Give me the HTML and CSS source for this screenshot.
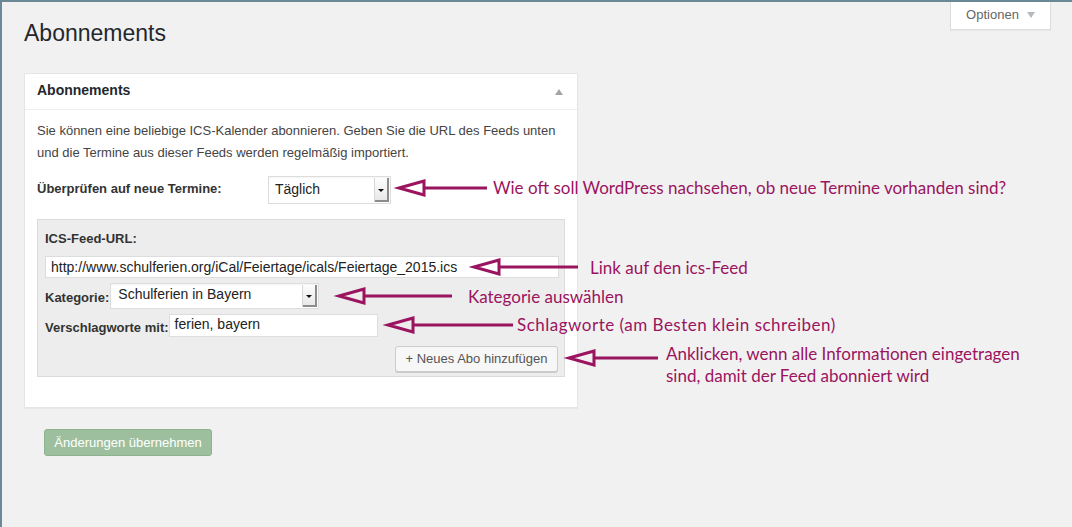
FILE: index.html
```html
<!DOCTYPE html>
<html lang="de">
<head>
<meta charset="utf-8">
<title>Abonnements</title>
<link rel="stylesheet" href="styles.css">
</head>
<body>
<div class="edge-marks"><span class="mark"></span><span class="mark-gap"></span><span class="mark"></span></div>
<div class="page">
  <div class="topbar">
    <h1 class="title">Abonnements</h1>
    <div class="options">Optionen <span class="options-caret"></span></div>
  </div>

  <div class="postbox">
    <div class="postbox-head">
      <span>Abonnements</span>
      <span class="toggle"></span>
    </div>
    <div class="postbox-body">
      <p class="intro">Sie können eine beliebige ICS-Kalender abonnieren. Geben Sie die URL des Feeds unten<br>und die Termine aus dieser Feeds werden regelmäßig importiert.</p>

      <div class="check-row">
        <span class="label check-label">Überprüfen auf neue Termine:</span>
        <div class="select select-freq">
          <span class="select-value">Täglich</span>
          <span class="select-btn"><span class="select-caret"></span></span>
        </div>
      </div>

      <div class="feedbox">
        <div class="label url-label">ICS-Feed-URL:</div>
        <div class="input input-url">http://www.schulferien.org/iCal/Feiertage/icals/Feiertage_2015.ics</div>
        <div class="field-row cat-row">
          <span class="label">Kategorie:</span>
          <div class="select select-cat">
            <span class="select-value">Schulferien in Bayern</span>
            <span class="select-btn"><span class="select-caret"></span></span>
          </div>
        </div>
        <div class="field-row tag-row">
          <span class="label">Verschlagworte mit:</span>
          <div class="input input-tags">ferien, bayern</div>
        </div>
        <div class="btn-row">
          <div class="btn-add">+ Neues Abo hinzufügen</div>
        </div>
      </div>
    </div>
  </div>

  <div class="btn-save">Änderungen übernehmen</div>
</div>

<div class="annotations">
  <svg class="arrows" width="1072" height="527" viewBox="0 0 1072 527" xmlns="http://www.w3.org/2000/svg">
    <g fill="none" stroke="#9a145f" stroke-width="3" stroke-linejoin="miter">
      <polygon points="399,188 424,181 424,195"/>
      <line x1="424" y1="188" x2="487" y2="188"/>
      <polygon points="474,267 499,260 499,274"/>
      <line x1="499" y1="267" x2="578" y2="267"/>
      <polygon points="339,296 364,289 364,303"/>
      <line x1="364" y1="296" x2="452" y2="296"/>
      <polygon points="388,325 413,318 413,332"/>
      <line x1="413" y1="325" x2="513" y2="325"/>
      <polygon points="569,358 594,351 594,365"/>
      <line x1="594" y1="358" x2="658" y2="358"/>
    </g>
  </svg>
  <div class="note note-1">Wie oft soll WordPress nachsehen, ob neue Termine vorhanden sind?</div>
  <div class="note note-2">Link auf den ics-Feed</div>
  <div class="note note-3">Kategorie auswählen</div>
  <div class="note note-4">Schlagworte (am Besten klein schreiben)</div>
  <div class="note note-5">Anklicken, wenn alle Informationen eingetragen<br>sind, damit der Feed abonniert wird</div>
</div>
</body>
</html>
```

FILE: styles.css
```css
html, body {
  margin: 0;
  padding: 0;
}

html {
  background: #f1f1f1;
}

body {
  width: 1072px;
  height: 527px;
  box-sizing: border-box;
  background: #f1f1f1;
  border-left: 2px solid #6b8896;
  border-top: 2px solid #6b8896;
  font-family: "Liberation Sans", Arial, sans-serif;
  color: #444;
  position: relative;
}

.edge-marks {
  position: absolute;
  left: -2px;
  top: 451px;
  width: 2px;
  display: flex;
  flex-direction: column;
}

.mark {
  display: block;
  width: 2px;
  height: 10px;
  background: #a3c0a3;
}

.mark-gap {
  display: block;
  width: 2px;
  height: 15px;
  background: #f1f1f1;
}

.page {
  padding-left: 22px;
}

.topbar {
  display: flex;
  justify-content: space-between;
  align-items: flex-start;
  padding-right: 21px;
}

.title {
  margin: 17px 0 0 0;
  font-size: 23px;
  line-height: 29px;
  font-weight: normal;
  color: #23282d;
}

.options {
  margin-top: -2px;
  width: 101px;
  height: 30px;
  box-sizing: border-box;
  background: #fff;
  border: 1px solid #ddd;
  border-top: none;
  box-shadow: 0 1px 1px rgba(0,0,0,0.04);
  font-size: 13px;
  line-height: 29px;
  color: #666;
  display: flex;
  align-items: center;
  justify-content: center;
}

.options-caret {
  width: 0;
  height: 0;
  border-left: 4px solid transparent;
  border-right: 4px solid transparent;
  border-top: 6px solid #b4b9be;
  margin-left: 8px;
  margin-top: 1px;
}

.postbox {
  margin-top: 25px;
  width: 554px;
  box-sizing: border-box;
  background: #fff;
  border: 1px solid #e5e5e5;
  box-shadow: 0 1px 1px rgba(0,0,0,0.04);
}

.postbox-head {
  height: 36px;
  box-sizing: border-box;
  border-bottom: 1px solid #eee;
  display: flex;
  align-items: center;
  justify-content: space-between;
  padding: 0 13px 3px 12px;
  font-size: 14px;
  font-weight: bold;
  color: #23282d;
}

.toggle {
  width: 0;
  height: 0;
  border-left: 4px solid transparent;
  border-right: 4px solid transparent;
  border-bottom: 6px solid #a0a5aa;
  margin-right: 1px;
  margin-top: 3px;
}

.postbox-body {
  padding: 10px 12px 30px 12px;
}

.intro {
  margin: 0;
  font-size: 13px;
  line-height: 22px;
  color: #444;
}

.label {
  font-size: 13px;
  font-weight: bold;
  color: #333;
}

.check-row {
  display: flex;
  align-items: center;
  margin-top: 12px;
}

.check-label {
  width: 231px;
  margin-top: -4px;
}

.select {
  display: flex;
  background: #fff;
  border: 1px solid #ddd;
  box-sizing: border-box;
  box-shadow: inset 0 1px 2px rgba(0,0,0,0.05);
}

.select-value {
  flex: 1;
  font-size: 14px;
  color: #222;
  padding-left: 6px;
}

.select-btn {
  width: 14px;
  margin: 1px 1px 1px 0;
  background: linear-gradient(to bottom, #fdfdfd, #e6e6e6);
  border-left: 1px solid #d6d6d6;
  box-shadow: inset -2px -2px 0 #8c8c8c;
  display: flex;
  align-items: center;
  justify-content: center;
}

.select-caret {
  width: 0;
  height: 0;
  border-left: 3px solid transparent;
  border-right: 3px solid transparent;
  border-top: 3px solid #111;
  margin-right: 2px;
}

.select-freq {
  width: 123px;
  height: 28px;
}

.select-freq .select-value {
  line-height: 25px;
}

.feedbox {
  margin-top: 15px;
  width: 528px;
  box-sizing: border-box;
  background: #ededed;
  border: 1px solid #dcdcdc;
  padding: 10px 5px 4px 7px;
}

.url-label {
  line-height: 18px;
}

.input {
  background: #fff;
  border: 1px solid #ddd;
  box-sizing: border-box;
  font-size: 14px;
  color: #222;
  padding-left: 5px;
}

.input-url {
  margin-top: 8px;
  height: 22px;
  line-height: 20px;
}

.field-row {
  display: flex;
  align-items: center;
}

.cat-row {
  margin-top: 5px;
}

.cat-row .label {
  margin-right: 1px;
  margin-top: 3px;
}

.select-cat {
  width: 209px;
  height: 26px;
}

.select-cat .select-value {
  line-height: 20px;
  padding-left: 7px;
}

.tag-row {
  margin-top: 5px;
}

.tag-row .label {
  margin-top: 3px;
}

.input-tags {
  width: 209px;
  height: 23px;
  line-height: 18px;
}

.btn-row {
  display: flex;
  justify-content: flex-end;
  margin-top: 9px;
  padding-right: 1px;
}

.btn-add {
  width: 163px;
  height: 26px;
  box-sizing: border-box;
  background: #f7f7f7;
  border: 1px solid #ccc;
  border-radius: 3px;
  box-shadow: 0 1px 0 #ccc;
  font-size: 13px;
  line-height: 24px;
  text-align: center;
  color: #555;
}

.btn-save {
  margin: 21px 0 0 20px;
  width: 168px;
  height: 27px;
  box-sizing: border-box;
  background: #9ebf9e;
  border: 1px solid #8db38d;
  border-radius: 3px;
  font-size: 13px;
  line-height: 25px;
  text-align: center;
  color: #fff;
}

.annotations {
  position: absolute;
  left: -2px;
  top: -2px;
  width: 1072px;
  height: 527px;
  pointer-events: none;
}

.arrows {
  position: absolute;
  left: 0;
  top: 0;
}

.note {
  position: absolute;
  font-family: Lato, "Open Sans", sans-serif;
  font-size: 17px;
  line-height: 22px;
  color: #9a145f;
  white-space: nowrap;
}

.note-1 { left: 493px; top: 177px; }
.note-2 { left: 590px; top: 257px; }
.note-3 { left: 468px; top: 286px; }
.note-4 { left: 517px; top: 314px; letter-spacing: 0.5px; }
.note-5 { left: 666px; top: 343px; }
```
